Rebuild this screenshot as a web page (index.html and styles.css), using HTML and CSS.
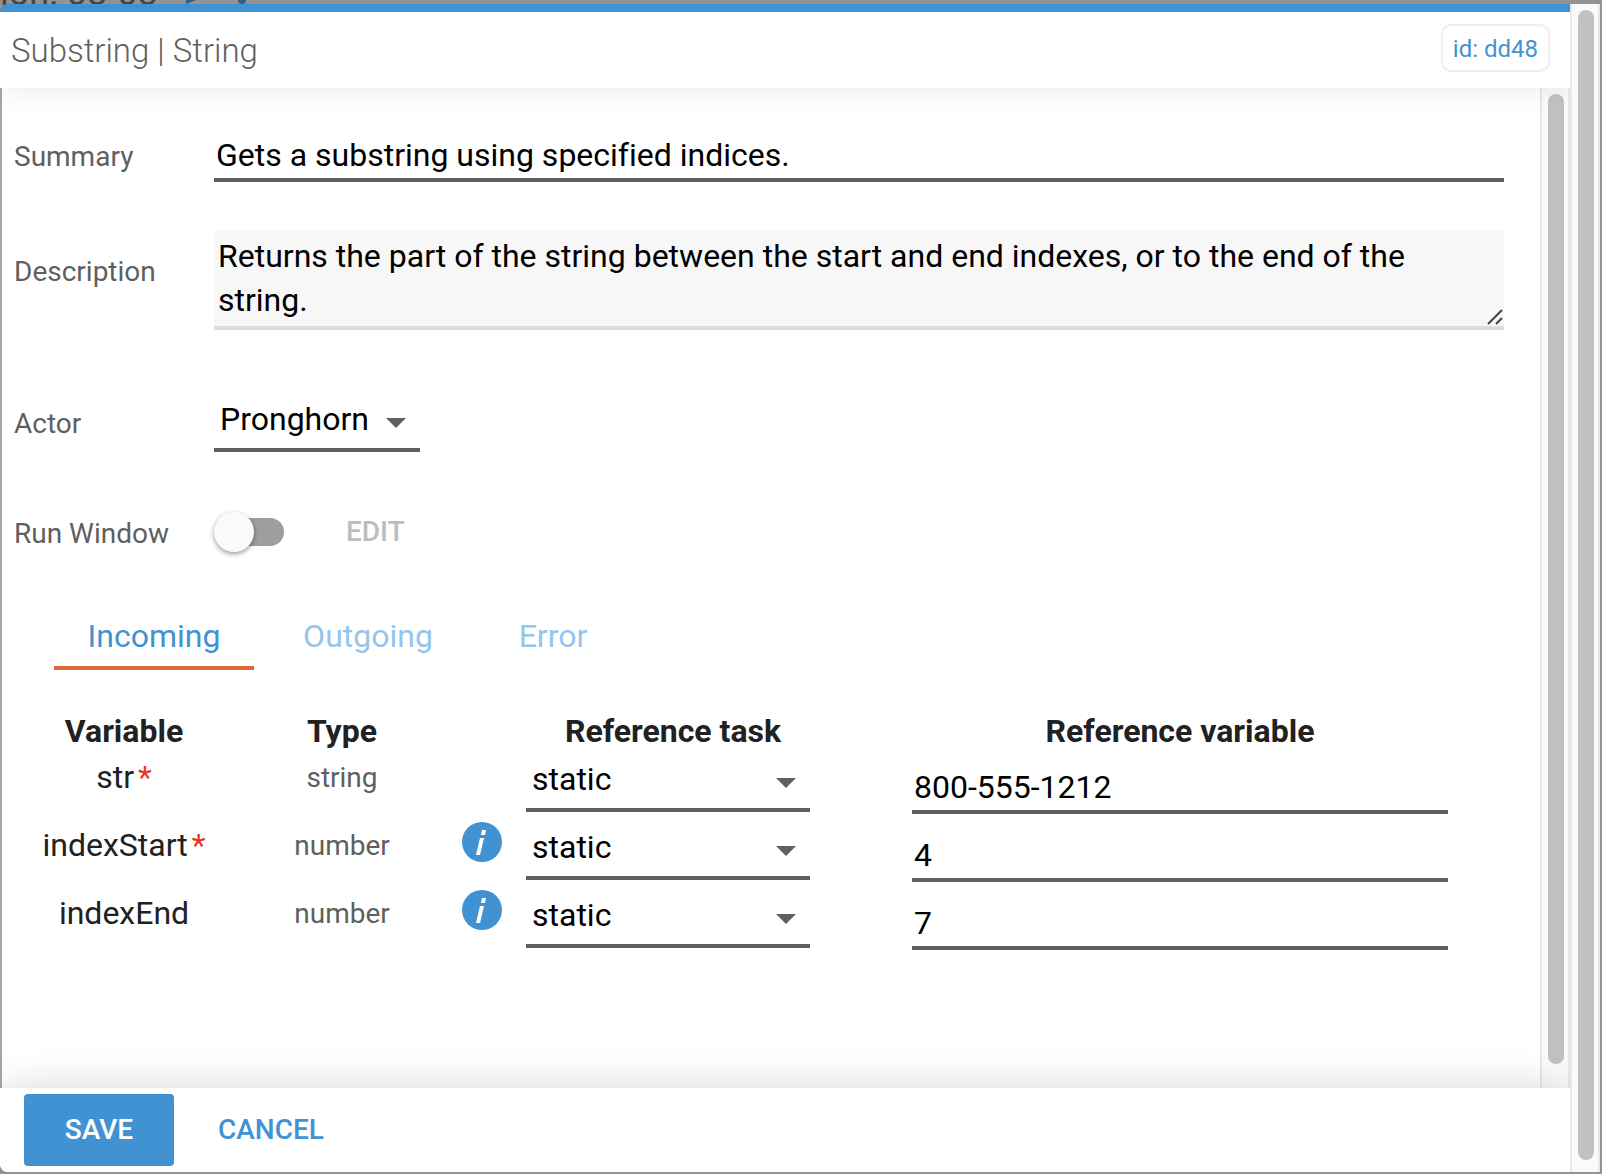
FILE: index.html
```html
<!DOCTYPE html>
<html lang="en">
<head>
<meta charset="utf-8">
<title>Substring | String</title>
<link rel="stylesheet" href="styles.css">
</head>
<body>
<div class="backdrop" aria-hidden="true">
  <span class="backdrop-text">ion: 08-08</span>
  <svg class="backdrop-icons" width="72" height="6" viewBox="0 0 72 6"><path d="M0 0H10L0 4Z"/><circle cx="56" cy="0" r="4"/></svg>
</div>
<div class="frame">
  <main class="dialog">
    <header class="dialog-header">
      <h1 class="dialog-title">Substring | String</h1>
      <span class="id-badge">id: dd48</span>
    </header>
    <div class="dialog-body">
      <form class="content" id="task-form">
        <div class="field field-summary">
          <label for="summary">Summary</label>
          <input class="line-input" id="summary" type="text" value="Gets a substring using specified indices.">
        </div>
        <div class="field field-description">
          <label for="description">Description</label>
          <div class="textarea-wrap">
            <textarea id="description" rows="2">Returns the part of the string between the start and end indexes, or to the end of the string.</textarea>
            <svg class="grip" width="16" height="16" viewBox="0 0 16 16"><path d="M1 15L15 1M9 15L15 9"/></svg>
          </div>
        </div>
        <div class="field field-actor">
          <label for="actor">Actor</label>
          <div class="select actor-select"><select id="actor"><option>Pronghorn</option></select></div>
        </div>
        <div class="field field-window">
          <label for="run-window">Run Window</label>
          <div class="window-controls">
            <input class="switch" id="run-window" type="checkbox" role="switch">
            <button class="edit" type="button" disabled>EDIT</button>
          </div>
        </div>
        <div class="tabs" role="tablist">
          <button class="tab active" type="button" role="tab" aria-selected="true">Incoming</button>
          <button class="tab" type="button" role="tab" aria-selected="false">Outgoing</button>
          <button class="tab" type="button" role="tab" aria-selected="false">Error</button>
        </div>
        <table class="variables">
          <colgroup><col class="col-name"><col class="col-type"><col class="col-info"><col class="col-task"><col></colgroup>
          <thead>
            <tr><th>Variable</th><th>Type</th><td></td><th>Reference task</th><th>Reference variable</th></tr>
          </thead>
          <tbody>
            <tr>
              <td class="name">str<span class="required">*</span></td>
              <td class="type">string</td>
              <td></td>
              <td><div class="select"><select aria-label="str reference task"><option>static</option></select></div></td>
              <td class="value"><input class="line-input" type="text" aria-label="str value" value="800-555-1212"></td>
            </tr>
            <tr>
              <td class="name">indexStart<span class="required">*</span></td>
              <td class="type">number</td>
              <td class="info"><button class="info-button" type="button" aria-label="About indexStart"><svg width="40" height="40" viewBox="0 0 40 40"><circle cx="20" cy="20" r="20"/><path d="M20 8H24L23 13H19ZM18 16H22L18 33H14Z"/></svg></button></td>
              <td><div class="select"><select aria-label="indexStart reference task"><option>static</option></select></div></td>
              <td class="value"><input class="line-input" type="text" aria-label="indexStart value" value="4"></td>
            </tr>
            <tr>
              <td class="name">indexEnd</td>
              <td class="type">number</td>
              <td class="info"><button class="info-button" type="button" aria-label="About indexEnd"><svg width="40" height="40" viewBox="0 0 40 40"><circle cx="20" cy="20" r="20"/><path d="M20 8H24L23 13H19ZM18 16H22L18 33H14Z"/></svg></button></td>
              <td><div class="select"><select aria-label="indexEnd reference task"><option>static</option></select></div></td>
              <td class="value"><input class="line-input" type="text" aria-label="indexEnd value" value="7"></td>
            </tr>
          </tbody>
        </table>
      </form>
      <div class="scroll-track inner-track"><div class="scroll-thumb"></div></div>
    </div>
    <footer class="dialog-footer">
      <button class="save" type="submit" form="task-form">SAVE</button>
      <button class="cancel" type="button">CANCEL</button>
    </footer>
  </main>
  <div class="scroll-track outer-track"><div class="scroll-thumb"></div></div>
</div>
</body>
</html>
```
FILE: styles.css
```css
* { box-sizing: border-box; }

body {
  margin: 0;
  min-height: 100vh;
  display: flex;
  flex-direction: column;
  padding: 4px 2px 2px 0;
  background: #939393;
  color: #212121;
  font: 32px/40px Roboto, "Liberation Sans", sans-serif;
  font-variant-ligatures: none;
}

input, select, textarea, button {
  margin: 0;
  padding: 0;
  border: 0;
  border-radius: 0;
  background: none;
  color: #000;
  font: inherit;
  font-variant-ligatures: none;
  outline: 0;
}

/* Sliver of the page behind the dialog */
.backdrop {
  position: absolute;
  top: 0;
  left: 0;
  width: 100%;
  height: 8px;
  overflow: hidden;
  display: flex;
  align-items: flex-end;
  gap: 28px;
  color: #444;
}
.backdrop-text {
  font-size: 36px;
  line-height: 30px;
}
.backdrop-icons { align-self: flex-start; fill: #2c5f8e; }

.frame {
  position: relative;
  flex: 1;
  display: flex;
}

.dialog {
  flex: 1;
  min-width: 0;
  display: flex;
  flex-direction: column;
  border-top: 8px solid #4192d3;
  border-radius: 8px 0 0 8px;
  background: #fff;
  overflow: hidden;
}

.dialog-header {
  position: relative;
  display: flex;
  align-items: flex-start;
  justify-content: space-between;
  height: 76px;
  padding: 12px 20px 0 11px;
  background: #fff;
  box-shadow: 0 4px 24px rgba(0, 0, 0, 0.07);
}
.dialog-title {
  margin: 0;
  padding-top: 7px;
  color: #5f5f5f;
  font-size: 33px;
  font-weight: 300;
}
.id-badge {
  padding: 2px 10px 0;
  border: 2px solid #eee;
  border-radius: 10px;
  color: #4192d3;
  font-size: 24px;
  line-height: 42px;
}

.dialog-body {
  flex: 1;
  display: flex;
}
.content {
  flex: 1;
  min-width: 0;
  padding: 46px 0 0 12px;
  border-left: 2px solid #a6a6a6;
}

.scroll-track {
  width: 30px;
  padding: 6px 4px 0 6px;
  display: flex;
  border: solid #e8e8e8;
  border-width: 0 2px;
  background: #fafafa;
}
.scroll-thumb {
  width: 16px;
  border-radius: 8px;
  background: #c1c1c1;
}
.inner-track { padding-bottom: 24px; }
.outer-track { padding-bottom: 12px; }

.field {
  display: grid;
  grid-template-columns: 200px 1fr;
  align-items: start;
  margin-right: 36px;
}
.field label {
  color: #5f5f5f;
  font-size: 28px;
}
.field-summary { align-items: baseline; }
.field-description { margin-top: 48px; }
.field-description label { line-height: 84px; }
.field-actor { margin-top: 58px; }
.field-actor label { line-height: 72px; }
.field-window { margin-top: 52px; }
.field-window label { line-height: 44px; }

.line-input {
  width: 100%;
  height: 48px;
  padding: 0 2px 2px;
  border-bottom: 4px solid #5f5f5f;
}

.textarea-wrap {
  position: relative;
  display: flex;
}
textarea {
  width: 100%;
  height: 100px;
  padding: 4px;
  border-bottom: 4px solid #ddd;
  background: #f7f7f7;
  line-height: 44px;
  resize: none;
  overflow: hidden;
}
.grip {
  position: absolute;
  right: 1px;
  bottom: 5px;
  fill: none;
  stroke: #444;
  stroke-width: 2;
}

.select {
  position: relative;
  width: 284px;
}
.select select {
  display: block;
  width: 100%;
  height: 66px;
  padding: 4px 40px 0 6px;
  border-bottom: 4px solid #5f5f5f;
  appearance: none;
}
.select::after {
  content: "";
  position: absolute;
  top: 32px;
  right: 14px;
  border: solid transparent;
  border-width: 10px 10px 0;
  border-top-color: #5f5f5f;
  pointer-events: none;
}
.actor-select { width: 206px; }
.actor-select select {
  height: 64px;
  padding-top: 2px;
}
.actor-select::after { top: 30px; }

.window-controls {
  display: flex;
  align-items: center;
  gap: 62px;
}
.switch {
  position: relative;
  width: 70px;
  height: 40px;
  appearance: none;
}
.switch::before {
  content: "";
  position: absolute;
  inset: 6px 0 6px 2px;
  border-radius: 14px;
  background: #9e9e9e;
}
.switch::after {
  content: "";
  position: absolute;
  top: 0;
  left: 0;
  width: 40px;
  height: 40px;
  border-radius: 50%;
  background: #fafafa;
  box-shadow: 0 2px 5px rgba(0, 0, 0, 0.4);
}
.edit {
  color: #bdbdbd;
  font-size: 28px;
  font-weight: 500;
}

.tabs {
  display: flex;
  gap: 14px;
  margin: 56px 0 0 40px;
}
.tab {
  min-width: 200px;
  padding: 4px 0 10px;
  border-bottom: 4px solid transparent;
  color: #96c4ea;
}
.tab.active {
  border-color: #e06739;
  color: #4192d3;
}
.tab:last-child { min-width: 142px; }

.variables {
  width: calc(100% - 10px);
  margin: 46px 0 0 10px;
  border-collapse: collapse;
  table-layout: fixed;
}
.variables th, .variables td {
  padding: 0;
  vertical-align: top;
}
.variables th {
  font-weight: 700;
  line-height: 30px;
}
.variables thead td { line-height: 30px; }
.variables tbody tr { height: 68px; }
.col-name { width: 200px; }
.col-type { width: 236px; }
.col-info { width: 66px; }
.col-task { width: 294px; }
.name {
  text-align: center;
  line-height: 62px;
}
.required {
  margin-left: 4px;
  color: #ea3323;
}
.type {
  text-align: center;
  color: #5f5f5f;
  font-size: 28px;
  line-height: 64px;
}
.variables .info { padding: 8px 0 0 2px; }
.info-button, .info-button svg { display: block; }
.info-button circle { fill: #4192d3; }
.info-button path { fill: #fff; }
.variables .value { padding: 0 92px; }
.value .line-input {
  display: block;
  height: 68px;
  padding-top: 20px;
}

.dialog-footer {
  position: relative;
  display: flex;
  align-items: center;
  gap: 32px;
  height: 84px;
  padding: 0 24px;
  background: #fff;
  box-shadow: 0 0 40px rgba(0, 0, 0, 0.16);
}
.dialog-footer button {
  height: 72px;
  font-size: 28px;
  font-weight: 500;
}
.save {
  width: 150px;
  border-radius: 4px;
  background: #4192d3;
}
.dialog-footer .save { color: #fff; }
.cancel {
  padding: 0 12px;
  color: #4192d3;
}
```
